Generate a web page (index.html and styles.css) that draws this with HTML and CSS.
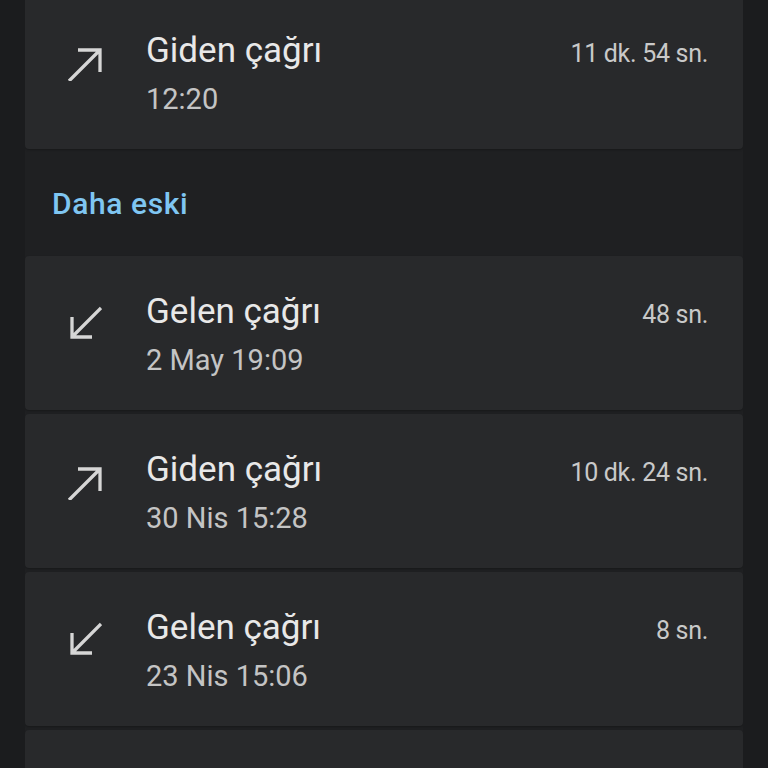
FILE: index.html
```html
<!DOCTYPE html>
<html lang="tr">
<head>
<meta charset="utf-8">
<title>Arama geçmişi</title>
<link rel="stylesheet" href="styles.css">
</head>
<body>
<div class="screen">
  <div class="list">
    <div class="card">
      <svg class="icon" viewBox="0 0 36 36"><path d="M12 5H34V27M34 5L3 36"/></svg>
      <div class="info">
        <div class="top"><span class="title">Giden çağrı</span><span class="dur">11 dk. 54 sn.</span></div>
        <div class="sub">12:20</div>
      </div>
    </div>

    <div class="section">Daha eski</div>

    <div class="group">
      <div class="card">
        <svg class="icon" viewBox="0 0 36 36"><path d="M6 11V31H26M6 31L35 2"/></svg>
        <div class="info">
          <div class="top"><span class="title">Gelen çağrı</span><span class="dur">48 sn.</span></div>
          <div class="sub">2 May 19:09</div>
        </div>
      </div>
      <div class="card">
        <svg class="icon" viewBox="0 0 36 36"><path d="M12 5H34V27M34 5L3 36"/></svg>
        <div class="info">
          <div class="top"><span class="title">Giden çağrı</span><span class="dur">10 dk. 24 sn.</span></div>
          <div class="sub">30 Nis 15:28</div>
        </div>
      </div>
      <div class="card">
        <svg class="icon" viewBox="0 0 36 36"><path d="M6 11V31H26M6 31L35 2"/></svg>
        <div class="info">
          <div class="top"><span class="title">Gelen çağrı</span><span class="dur">8 sn.</span></div>
          <div class="sub">23 Nis 15:06</div>
        </div>
      </div>
      <div class="card"></div>
    </div>
  </div>
</div>
</body>
</html>
```

FILE: styles.css
```css
html, body {
  margin: 0;
  padding: 0;
  background: #1b1c1e;
  height: 768px;
  overflow: hidden;
}

body {
  font-family: Roboto, "Noto Sans", "Liberation Sans", sans-serif;
  color: #e3e3e3;
}

.screen {
  margin: 0 25px;
  width: 718px;
  background: #1f2022;
  height: 768px;
  overflow: hidden;
}

.list {
  margin-top: -5px;
  display: flex;
  flex-direction: column;
}

.group {
  display: flex;
  flex-direction: column;
  gap: 4px;
}

.card {
  background: #28292b;
  border-radius: 4px;
  height: 154px;
  box-sizing: border-box;
  padding: 36px 35px 33px 0;
  display: flex;
  align-items: flex-start;
  box-shadow: 0 1px 2px rgba(0, 0, 0, 0.25);
}

.icon {
  width: 36px;
  height: 36px;
  flex: none;
  margin: 14px 44px 0 41px;
  fill: none;
  stroke: #d6d6d6;
  stroke-width: 3.3;
  stroke-linejoin: miter;
  stroke-linecap: butt;
}

.info {
  flex: 1;
  display: flex;
  flex-direction: column;
}

.top {
  display: flex;
  justify-content: space-between;
  align-items: baseline;
}

.title {
  font-size: 35px;
  line-height: 40px;
  color: #e8e8e8;
}

.dur {
  font-size: 25px;
  line-height: 30px;
  color: #c9c9c9;
  letter-spacing: -0.3px;
}

.sub {
  margin-top: 11px;
  font-size: 29px;
  line-height: 34px;
  color: #c4c4c4;
}

.section {
  height: 107px;
  box-sizing: border-box;
  padding: 37px 0 0 27px;
  font-size: 30px;
  line-height: 35px;
  letter-spacing: 0.6px;
  font-weight: 500;
  color: #7fc6f2;
}
```
